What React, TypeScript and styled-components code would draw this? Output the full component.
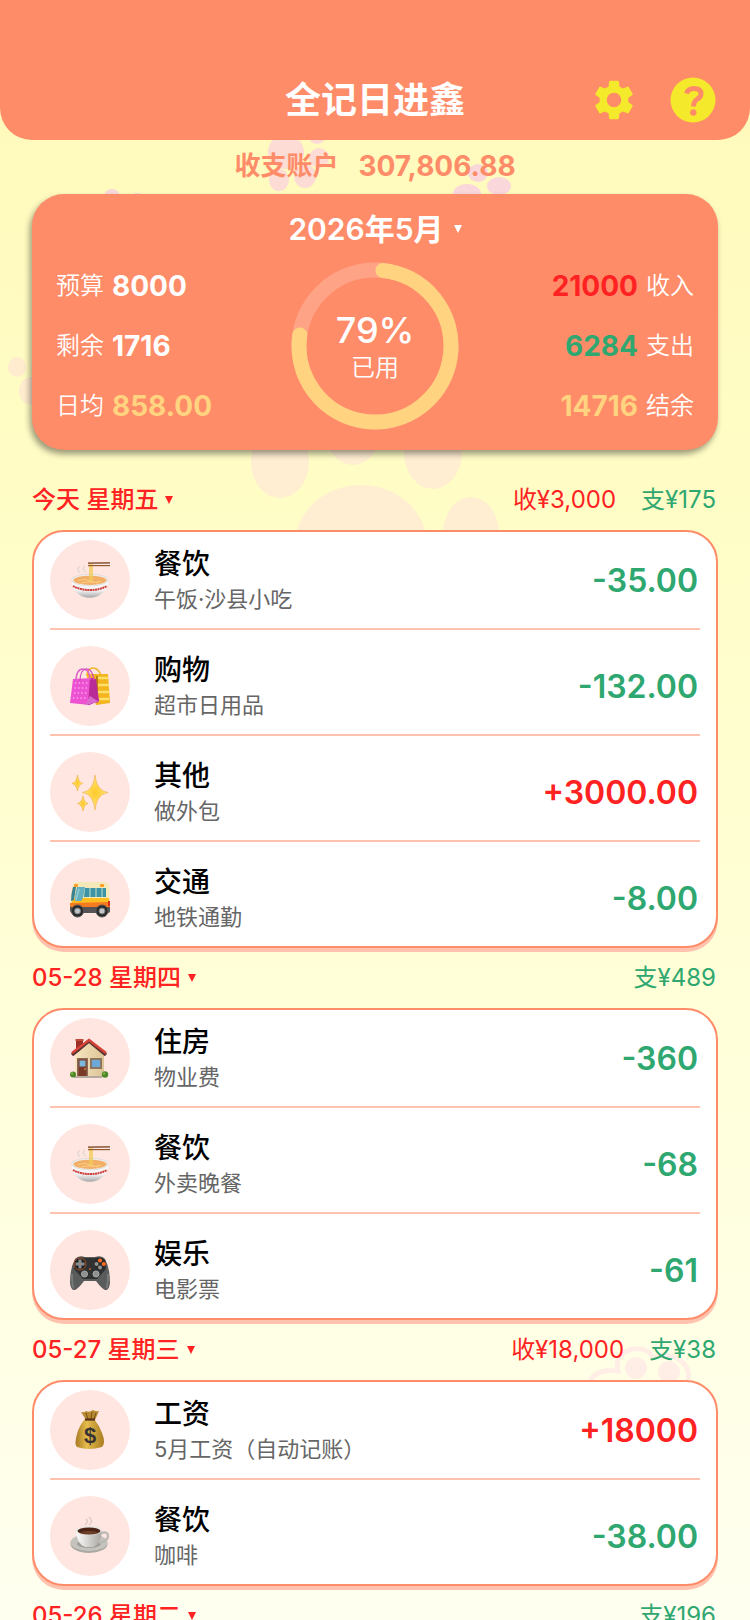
import React from "react";
import styled, { createGlobalStyle } from "styled-components";
import { MdSettings } from "react-icons/md";

const colors = {
  coral: "#ff8c69",
  coralSoft: "#ffc2ae",
  blush: "#ffe6e0",
  income: "#ff2222",
  expense: "#2fa770",
  gold: "#ffd37f",
  lemon: "#f5e92b",
};

const GlobalStyle = createGlobalStyle`
  * { box-sizing: border-box; }
  body { margin: 0; }
  button { font: inherit; color: inherit; background: none; border: 0; padding: 0; cursor: pointer; }
  h1, h2, h3, p, ul, dl, dd { margin: 0; padding: 0; }
  ul { list-style: none; }
`;

const Screen = styled.div`
  position: relative;
  height: 100vh;
  overflow-x: hidden;
  overflow-y: auto;
  scrollbar-width: none;
  background: linear-gradient(180deg, #fff9b9 0%, #fffdc8 35%, #ffffdc 68%, #fffff0 100%);
  font-family: Inter, "Noto Sans CJK SC", sans-serif;
  color: #000;
`;

const Backdrop = styled.svg`
  position: absolute;
  top: 0;
  left: 50%;
  margin-left: -375px;
  width: 750px;
  height: 1620px;
  pointer-events: none;
`;

const Content = styled.div`
  position: relative;
`;

const Header = styled.header`
  display: grid;
  grid-template-columns: 1fr auto 1fr;
  align-items: center;
  padding: 60px 34px 0;
  height: 140px;
  border-radius: 0 0 32px 32px;
  background: ${colors.coral};
`;

const Title = styled.h1`
  grid-column: 2;
  font-size: 36px;
  line-height: 44px;
  font-weight: 600;
  color: #fff;
`;

const HeaderActions = styled.div`
  display: flex;
  justify-content: flex-end;
  align-items: center;
  gap: 32px;
`;

const IconButton = styled.button`
  display: flex;
  color: ${colors.lemon};
`;

const Account = styled.p`
  display: flex;
  justify-content: center;
  align-items: center;
  gap: 20px;
  height: 54px;
  padding-bottom: 2px;
  line-height: 32px;
  font-weight: 600;
  color: ${colors.coral};
`;

const AccountName = styled.span`
  font-size: 26px;
`;

const AccountBalance = styled.span`
  font-size: 28px;
  font-weight: 700;
`;

const Main = styled.main`
  padding: 0 32px;
`;

const Budget = styled.section`
  height: 256px;
  margin-bottom: 20px;
  padding: 17px 24px 0;
  border-radius: 32px;
  background: ${colors.coral};
  box-shadow: -2px 4px 6px rgba(0, 0, 0, 0.4);
  color: #fff;
`;

const MonthButton = styled.button`
  display: flex;
  align-items: center;
  gap: 10px;
  margin: 0 auto;
  font-size: 30px;
  line-height: 36px;
  font-weight: 600;
`;

const BudgetBody = styled.div`
  display: grid;
  grid-template-columns: 1fr auto 1fr;
  align-items: center;
  margin-top: 15px;
`;

const Stats = styled.dl<{ $end?: boolean }>`
  display: flex;
  flex-direction: column;
  gap: 24px;
  align-items: ${(p) => (p.$end ? "flex-end" : "flex-start")};
`;

const Stat = styled.div<{ $end?: boolean }>`
  display: flex;
  flex-direction: ${(p) => (p.$end ? "row-reverse" : "row")};
  align-items: center;
  gap: 8px;
  line-height: 36px;
`;

const StatLabel = styled.dt`
  font-size: 24px;
  font-weight: 350;
`;

const StatValue = styled.dd<{ $color?: string }>`
  font-size: 28px;
  font-weight: 700;
  color: ${(p) => p.$color ?? "#fff"};
`;

const Gauge = styled.div`
  display: grid;
  place-items: center;
  width: 168px;
  height: 168px;
  & > * { grid-area: 1 / 1; }
`;

const GaugeText = styled.div`
  padding-top: 4px;
  text-align: center;
`;

const Percent = styled.div`
  font-size: 36px;
  line-height: 40px;
  font-weight: 500;
`;

const PercentLabel = styled.div`
  font-size: 24px;
  line-height: 36px;
  font-weight: 350;
`;

const DayHeader = styled.div`
  display: flex;
  justify-content: space-between;
  align-items: center;
  height: 60px;
  font-size: 24px;
  line-height: 32px;
  padding-right: 2px;
`;

const DayButton = styled.button`
  display: flex;
  align-items: center;
  gap: 7px;
  font-weight: 500;
  color: ${colors.income};
`;

const Totals = styled.div`
  display: flex;
  gap: 25px;
`;

const Total = styled.span<{ $income?: boolean }>`
  color: ${(p) => (p.$income ? colors.income : colors.expense)};
`;

const Records = styled.ul`
  display: flex;
  flex-direction: column;
  gap: 16px;
  padding: 8px 16px 0;
  border: 2px solid ${colors.coral};
  border-radius: 32px;
  background: #fff;
  box-shadow: 0 4px 0 ${colors.coralSoft};
`;

const Record = styled.li`
  display: flex;
  align-items: center;
  gap: 24px;
  padding-bottom: 8px;
  border-bottom: 2px solid ${colors.coralSoft};
  &:last-child { border-bottom: 0; }
`;

const Badge = styled.div`
  display: grid;
  place-items: center;
  flex: none;
  width: 80px;
  height: 80px;
  border-radius: 50%;
  background: ${colors.blush};
`;

const Details = styled.div`
  flex: 1;
  min-width: 0;
  padding-top: 2px;
`;

const Category = styled.h3`
  font-size: 28px;
  line-height: 36px;
  font-weight: 500;
`;

const Note = styled.p`
  font-size: 22px;
  line-height: 35px;
  color: #666;
`;

const Amount = styled.span<{ $income?: boolean }>`
  padding: 2px 2px 0 0;
  font-size: 32px;
  line-height: 40px;
  font-weight: 600;
  color: ${(p) => (p.$income ? colors.income : colors.expense)};
`;

const Caret = () => (
  <svg width="8" height="8" viewBox="0 0 8 8" aria-hidden="true">
    <path d="M0 0h8L4 8z" fill="currentColor" />
  </svg>
);

const HelpIcon = () => (
  <svg width="46" height="46" viewBox="-23 -23 46 46" aria-hidden="true">
    <circle r="22.500" fill="currentColor" />
    <path
      d="M-6.500-6.500Q-5-11.500 1-11.500Q8-11.500 8-6Q8-3 4.500-1Q.5 1.500 .5 6.500"
      fill="none"
      stroke={colors.coral}
      strokeWidth="5"
    />
    <circle cx=".3" cy="12.500" r="3.200" fill={colors.coral} />
  </svg>
);

type IconName = "noodles" | "bags" | "sparkles" | "bus" | "house" | "gamepad" | "money" | "coffee";

const drawings: Record<IconName, React.ReactNode> = {
  noodles: (
    <>
      <path d="M10 13q-4-3 0-7M16 12q-5-3-1-6" fill="none" stroke="#d8d3d0" strokeWidth="1.500" opacity=".7" />
      <path d="M1.500 20c.5 9 6 14.500 11 16.500q7.500 2.500 14.500 0c5-2 11-7.500 11.500-16.500z" fill="url(#bowl)" />
      <ellipse cx="20" cy="20" rx="18.500" ry="5.800" fill="#f0eeee" stroke="#d5d3d3" strokeWidth=".6" />
      <ellipse cx="20" cy="20.300" rx="16.500" ry="4.600" fill="#f3ae68" />
      <path d="M8 21q6-3 12 0t11 0M11 23q8-2 18 0" fill="none" stroke="#f8cf7c" strokeWidth="1.200" />
      <path d="M20 4v17M22 4v17" stroke="#f0cb55" strokeWidth="1.500" />
      <path d="M18 5.600h22" stroke="#96582d" strokeWidth="1.200" />
      <path d="M18 3.200 40 2.900" stroke="#6f3a18" strokeWidth="1.200" />
      <path d="M3 26q7 4 17 4t17-4" fill="none" stroke="#cf3b38" strokeWidth="2" strokeDasharray="2 .5" />
    </>
  ),
  bags: (
    <>
      <path d="M17 9q1-7 6-7t8 7" fill="none" stroke="#f0b429" strokeWidth="1.500" />
      <path d="M16 8h22l2 29-14 2z" fill="#f3b51d" />
      <path d="M27 12h11M27 19h12M27 26h12M27 33h12" stroke="#ffe06a" strokeWidth="2.600" />
      <path d="M27 10v27" stroke="#a96c0c" strokeWidth="1.600" />
      <path d="M3 13 23 12 29 34 20 39 0 37z" fill="#ec52d2" />
      <path d="m20 12-2 27 11-4-3-22z" fill="#b92c98" />
      <path d="m20 30-5 9 14-3z" fill="#d86bcd" />
      <path d="M6 16q0-13 7-13t7 11" fill="none" stroke="#e25ecd" strokeWidth="1.600" />
      <path d="M10 15q0-11 6-12t8 11" fill="none" stroke="#d24abd" strokeWidth="1.200" />
      <path d="M5 17h13M4.500 22H18M4 27h13M3 32h13" stroke="#ffa8f0" strokeWidth="1.300" strokeDasharray="1.300 2.400" />
    </>
  ),
  sparkles: (
    <g fill="url(#spark)" stroke="#eda12d" strokeWidth=".5">
      <path d="M25 3Q26.500 19 38 20.500Q26.500 22 25 38Q23.500 22 12.500 20.500Q23.500 19 25 3z" />
      <path d="M7.500 3Q8.500 10.500 12.500 11.500Q8.500 12.500 7.500 19Q6.500 12.500 2 11.500Q6.500 10.500 7.500 3z" />
      <path d="M13 24Q14 30.500 18 31.500Q14 32.500 13 39Q12 32.500 7.500 31.500Q12 30.500 13 24z" />
    </g>
  ),
  bus: (
    <g transform="translate(0 3)">
      <path d="M3 3q1-2 5-2h26q4 0 5 4l1 27H0q0-17 3-29z" fill="#f5e8b8" />
      <path d="M3 17h36l1 9H0z" fill="#ffbf20" />
      <path d="M0 22 40 21v6H0z" fill="#f47b20" />
      <path d="M0 26h40v4q0 2-3 2H3q-3 0-3-3z" fill="#545456" />
      <path d="M3 6q-2 7-2 14l3-1L6 6z" fill="#3c818d" />
      <path d="M7 6h8l-2 11-2 3H5q0-8 2-14z" fill="#63afbd" />
      <path d="M15 7h21v9H14z" fill="#3b93a5" />
      <path d="M20 7v9M26 7v9M32 7v9" stroke="#c7dfc9" />
      <path d="M9 8 6 19" stroke="#91ccd3" strokeWidth="1.500" />
      <rect x="4" y="3" width="4" height="3" rx="1" fill="#ff9b20" />
      <rect x="30" y="3" width="4" height="3" rx="1" fill="#ff9b20" />
      <path d="M39 20v5" stroke="#d52b1f" strokeWidth="2" />
      <g fill="#28292a" stroke="#555" strokeWidth="1">
        <circle cx="7.500" cy="30" r="6" /><circle cx="32" cy="30" r="6" />
      </g>
      <g fill="#c1c5c8" stroke="#77797b"><circle cx="7.500" cy="30" r="3" /><circle cx="32" cy="30" r="3" /></g>
    </g>
  ),
  house: (
    <g transform="translate(0 1)">
      <path d="M6 1h7v12H6z" fill="#9b3027" />
      <path d="M5.500 1h8" stroke="#c34b39" strokeWidth="2" />
      <path d="M5 16 19 3l15 13v22H5z" fill="url(#wall)" />
      <path d="M2 16 19 2l17 14" fill="none" stroke="#5b332f" strokeWidth="3.500" />
      <path d="M2 14 19 1l17 13" fill="none" stroke="#d8443a" strokeWidth="2.400" />
      <path d="M7 19h11v19H7z" fill="#8d6958" />
      <path d="M8.500 20.500h8V38h-8z" fill="#7a3827" />
      <path d="M9.500 21.500h6v6h-6z" fill="#7bb9dc" />
      <circle cx="15" cy="30" r=".8" fill="#e4b94f" />
      <path d="M20 19h12v11H20z" fill="#8d7560" />
      <path d="M22 21h8v7h-8z" fill="#6ba9d9" />
      <path d="M4 38h28" stroke="#b5aaa0" strokeWidth="2" />
      <circle cx="3" cy="35.500" r="3" fill="#4b8829" /><circle cx="35" cy="35.500" r="3.200" fill="#4b8829" />
      <circle cx="2" cy="34.500" r="1.200" fill="#82ae43" /><circle cx="34" cy="34.500" r="1.200" fill="#82ae43" />
    </g>
  ),
  gamepad: (
    <g transform="translate(0 2)">
      <path d="M5 7q3-4 10-2h10q7-2 10 2 5 9 5 24-1 8-5 7-3-1-9-9H14q-6 8-9 9-4 1-5-7Q0 16 5 7z" fill="#5a5c5b" />
      <path d="M5 8q4-4 10-2h10q6-2 10 2l1 9-9 10H13L4 17z" fill="#303231" />
      <path d="M2 22q0 13 2 14M38 22q0 13-2 14" stroke="#777a78" strokeWidth="2" fill="none" />
      <circle cx="10" cy="12" r="6" fill="#222" stroke="#a54f2c" />
      <path d="M8.500 7.500h3v3h3v3h-3v3h-3v-3h-3v-3h3z" fill="#8b8e8d" />
      <circle cx="30" cy="12" r="6" fill="#292b2a" />
      <circle cx="30" cy="8.500" r="2.100" fill="#ff6820" /><circle cx="33.800" cy="12" r="2.100" fill="#ff6820" />
      <circle cx="26.500" cy="12" r="2" fill="#929493" /><circle cx="30" cy="15.500" r="2" fill="#929493" />
      <circle cx="20" cy="17" r="1" fill="#c95827" />
      <g fill="#8d9090" stroke="#a8abab" strokeWidth="1"><circle cx="14.500" cy="22" r="3" /><circle cx="26" cy="22" r="3" /></g>
    </g>
  ),
  money: (
    <>
      <path d="M11 2q3 1 5-1 3 2 7-1 3 2 6 1l-4 9H16z" fill="#b78a31" />
      <path d="M15 9q-6 7-8 15-3 11 0 13 12 4 25 0 4-4 0-14-3-8-8-14z" fill="url(#gold)" />
      <path d="M16 3l2 6M22 2l-1 7M26 3l-2 6" stroke="#76541a" />
      <path d="M15 9.500h10" stroke="#60371b" strokeWidth="2.400" />
      <text x="20" y="33" textAnchor="middle" fontFamily="Liberation Sans, sans-serif" fontSize="22" fontWeight="700" fill="#383333">$</text>
    </>
  ),
  coffee: (
    <>
      <path d="M15 9q4-3 1-6M19 9q5-4 0-8" fill="none" stroke="#c8bab6" strokeWidth="1.500" opacity=".6" />
      <ellipse cx="19" cy="28" rx="18.500" ry="9" fill="#aaa8a3" />
      <ellipse cx="19" cy="26.500" rx="18.500" ry="8.500" fill="#c4c3be" />
      <ellipse cx="19" cy="28" rx="12" ry="4" fill="#a19e99" />
      <path d="M31 17q7-2 7 3t-9 7" fill="none" stroke="#b9b7b3" strokeWidth="2.200" />
      <path d="M6 15q1 13 9 16h8q8-3 9-16z" fill="url(#cup)" />
      <ellipse cx="19" cy="14.500" rx="13" ry="4.500" fill="#e7e6e3" />
      <ellipse cx="19" cy="15" rx="11.500" ry="3.500" fill="#4b2415" />
      <ellipse cx="19" cy="16.500" rx="8" ry="1.500" fill="#724129" />
    </>
  ),
};

const CategoryIcon = ({ name }: { name: IconName }) => (
  <svg width="40" height="40" viewBox="0 0 40 40" overflow="visible" aria-hidden="true">{drawings[name]}</svg>
);

const SharedGradients = () => (
  <svg width="0" height="0" display="block" aria-hidden="true">
    <defs>
      <linearGradient id="bowl" x2="0" y2="1"><stop stopColor="#fff" /><stop offset=".6" stopColor="#f0f0f0" /><stop offset="1" stopColor="#a8a8ab" /></linearGradient>
      <radialGradient id="spark"><stop stopColor="#ffc928" /><stop offset="1" stopColor="#ffe77c" /></radialGradient>
      <linearGradient id="wall"><stop stopColor="#f7e6c0" /><stop offset="1" stopColor="#dcc496" /></linearGradient>
      <linearGradient id="gold"><stop stopColor="#a87922" /><stop offset=".4" stopColor="#e4bd4c" /><stop offset="1" stopColor="#aa7c20" /></linearGradient>
      <linearGradient id="cup"><stop stopColor="#fbfbfa" /><stop offset="1" stopColor="#aaa7a2" /></linearGradient>
    </defs>
  </svg>
);

const PawPrints = () => (
  <Backdrop viewBox="0 0 750 1620" aria-hidden="true">
    <g fill="#fcdcd5">
      <ellipse cx="286" cy="152" rx="18" ry="17" />
      <circle cx="317" cy="135" r="9" />
      <circle cx="319" cy="158" r="10" />
      <ellipse cx="279" cy="180" rx="10" ry="11" />
      <ellipse cx="305" cy="176" rx="11" ry="12" />
    </g>
    <g fill="#fad7da">
      <ellipse cx="478" cy="173" rx="10" ry="9" />
      <ellipse cx="499" cy="186" rx="12" ry="9" />
      <ellipse cx="467" cy="194" rx="14" ry="10" />
      <circle cx="112" cy="197" r="8" />
      <circle cx="137" cy="201" r="8" />
    </g>
    <g fill="#ffebce">
      <ellipse cx="17" cy="367" rx="9" ry="10" />
      <ellipse cx="32" cy="391" rx="13" ry="14" />
    </g>
    <g fill="#ffeed1">
      <ellipse cx="280" cy="462" rx="29" ry="36" />
      <ellipse cx="353" cy="430" rx="28" ry="35" />
      <ellipse cx="433" cy="452" rx="29" ry="37" />
      <ellipse cx="361" cy="545" rx="66" ry="60" />
      <ellipse cx="471" cy="534" rx="28" ry="37" />
    </g>
    <g fill="#ffeee6">
      <circle cx="636" cy="1368" r="11" />
      <circle cx="669" cy="1372" r="11" />
    </g>
    <path
      d="M589 1384q5-16 29-13-4-18 15-22 15-2 20 9 16-6 28 3 11 9 6 25"
      fill="none"
      stroke="#ffeee6"
      strokeWidth="5"
    />
  </Backdrop>
);

const RING_RADIUS = 76;

const ringPoint = (degrees: number) => {
  const a = (degrees * Math.PI) / 180;
  return `${84 + RING_RADIUS * Math.sin(a)} ${84 - RING_RADIUS * Math.cos(a)}`;
};

const ProgressRing = ({ percent }: { percent: number }) => (
  <svg width="168" height="168" viewBox="0 0 168 168" aria-hidden="true">
    <circle cx="84" cy="84" r={RING_RADIUS} fill="none" stroke="#fff" strokeOpacity=".2" strokeWidth="15" />
    <path
      d={`M${ringPoint(6)}A${RING_RADIUS} ${RING_RADIUS} 0 ${percent > 50 ? 1 : 0} 1 ${ringPoint(percent * 3.6 - 6)}`}
      fill="none"
      stroke={colors.gold}
      strokeWidth="15"
      strokeLinecap="round"
    />
  </svg>
);

interface RecordItem {
  icon: IconName;
  category: string;
  note: string;
  amount: string;
}

interface Day {
  label: string;
  income?: string;
  expense: string;
  records: RecordItem[];
}

const days: Day[] = [
  {
    label: "今天 星期五",
    income: "3,000",
    expense: "175",
    records: [
      { icon: "noodles", category: "餐饮", note: "午饭·沙县小吃", amount: "-35.00" },
      { icon: "bags", category: "购物", note: "超市日用品", amount: "-132.00" },
      { icon: "sparkles", category: "其他", note: "做外包", amount: "+3000.00" },
      { icon: "bus", category: "交通", note: "地铁通勤", amount: "-8.00" },
    ],
  },
  {
    label: "05-28 星期四",
    expense: "489",
    records: [
      { icon: "house", category: "住房", note: "物业费", amount: "-360" },
      { icon: "noodles", category: "餐饮", note: "外卖晚餐", amount: "-68" },
      { icon: "gamepad", category: "娱乐", note: "电影票", amount: "-61" },
    ],
  },
  {
    label: "05-27 星期三",
    income: "18,000",
    expense: "38",
    records: [
      { icon: "money", category: "工资", note: "5月工资（自动记账）", amount: "+18000" },
      { icon: "coffee", category: "餐饮", note: "咖啡", amount: "-38.00" },
    ],
  },
  { label: "05-26 星期二", expense: "196", records: [] },
];

const DaySection = ({ day }: { day: Day }) => (
  <section>
    <DayHeader>
      <DayButton type="button">
        {day.label}
        <Caret />
      </DayButton>
      <Totals>
        {day.income && <Total $income>收¥{day.income}</Total>}
        <Total>支¥{day.expense}</Total>
      </Totals>
    </DayHeader>
    {day.records.length > 0 && (
      <Records>
        {day.records.map((item) => (
          <Record key={item.category + item.note}>
            <Badge>
              <CategoryIcon name={item.icon} />
            </Badge>
            <Details>
              <Category>{item.category}</Category>
              <Note>{item.note}</Note>
            </Details>
            <Amount $income={item.amount.startsWith("+")}>{item.amount}</Amount>
          </Record>
        ))}
      </Records>
    )}
  </section>
);

export default function App() {
  return (
    <Screen>
      <GlobalStyle />
      <SharedGradients />
      <PawPrints />
      <Content>
        <Header>
          <Title>全记日进鑫</Title>
          <HeaderActions>
            <IconButton type="button" aria-label="设置">
              <MdSettings size={48} />
            </IconButton>
            <IconButton type="button" aria-label="帮助">
              <HelpIcon />
            </IconButton>
          </HeaderActions>
        </Header>
        <Account>
          <AccountName>收支账户</AccountName>
          <AccountBalance>307,806.88</AccountBalance>
        </Account>
        <Main>
          <Budget>
            <MonthButton type="button">
              2026年5月
              <Caret />
            </MonthButton>
            <BudgetBody>
              <Stats>
                <Stat><StatLabel>预算</StatLabel><StatValue>8000</StatValue></Stat>
                <Stat><StatLabel>剩余</StatLabel><StatValue>1716</StatValue></Stat>
                <Stat><StatLabel>日均</StatLabel><StatValue $color={colors.gold}>858.00</StatValue></Stat>
              </Stats>
              <Gauge>
                <ProgressRing percent={79} />
                <GaugeText>
                  <Percent>79%</Percent>
                  <PercentLabel>已用</PercentLabel>
                </GaugeText>
              </Gauge>
              <Stats $end>
                <Stat $end><StatLabel>收入</StatLabel><StatValue $color={colors.income}>21000</StatValue></Stat>
                <Stat $end><StatLabel>支出</StatLabel><StatValue $color={colors.expense}>6284</StatValue></Stat>
                <Stat $end><StatLabel>结余</StatLabel><StatValue $color={colors.gold}>14716</StatValue></Stat>
              </Stats>
            </BudgetBody>
          </Budget>
          {days.map((day) => (
            <DaySection key={day.label} day={day} />
          ))}
        </Main>
      </Content>
    </Screen>
  );
}
